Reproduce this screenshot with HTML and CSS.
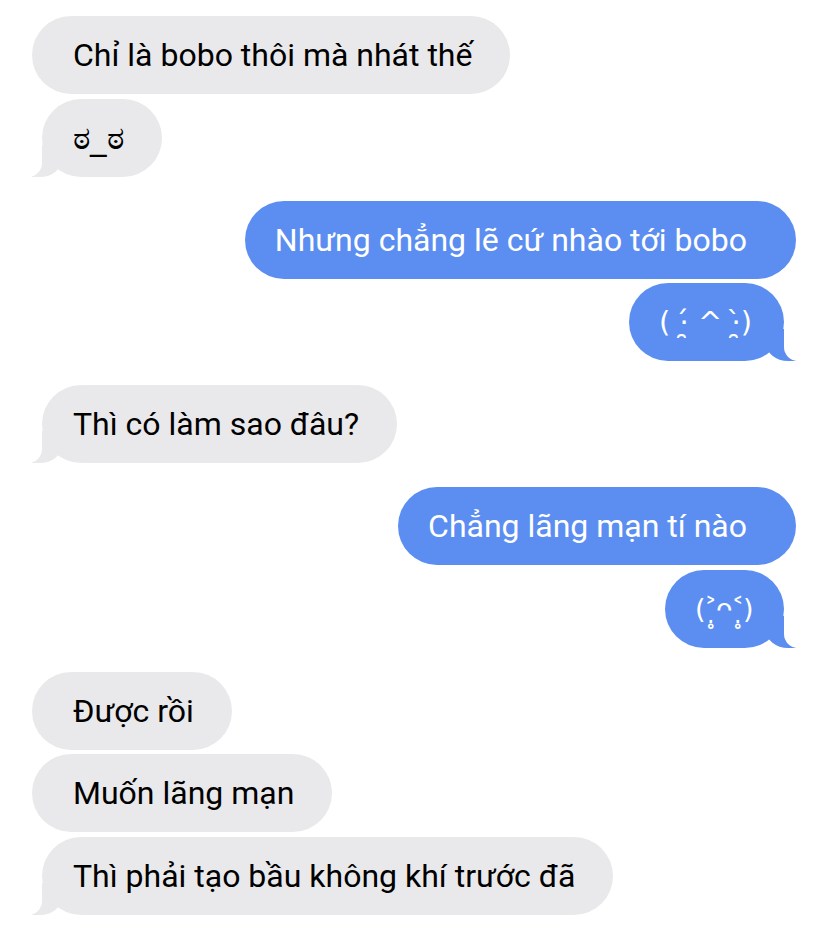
FILE: index.html
```html
<!DOCTYPE html>
<html lang="vi">
<head>
    <meta charset="UTF-8">
    <meta name="viewport" content="width=device-width, initial-scale=1.0">
    <title>Tin nhắn</title>
    <link rel="stylesheet" href="styles.css">
</head>
<body>
    <main class="chat">
        <div class="group">
            <div class="msg in">Chỉ là bobo thôi mà nhát thế</div>
            <div class="msg in tail"><span class="face look">ಠ_ಠ</span></div>
        </div>

        <div class="group">
            <div class="msg out">Nhưng chẳng lẽ cứ nhào tới bobo</div>
            <div class="msg out tail"><span class="face sad">( ·̯́ ^ ·̯̀)</span></div>
        </div>

        <div class="group">
            <div class="msg in tail">Thì có làm sao đâu?</div>
        </div>

        <div class="group">
            <div class="msg out">Chẳng lãng mạn tí nào</div>
            <div class="msg out tail"><span class="face cry">(˃̣̥ᴖ˂̣̥)</span></div>
        </div>

        <div class="group">
            <div class="msg in">Được rồi</div>
            <div class="msg in">Muốn lãng mạn</div>
            <div class="msg in tail">Thì phải tạo bầu không khí trước đã</div>
        </div>
    </main>
</body>
</html>
```

FILE: styles.css
```css
body {
    margin: 0;
    padding: 0;
    background: #fff;
    font-family: Roboto, "DejaVu Sans", "Noto Sans", sans-serif;
}

.chat {
    display: flex;
    flex-direction: column;
    gap: 24px;
    padding: 16px 32px 0 32px;
}

.group {
    display: flex;
    flex-direction: column;
    gap: 4.5px;
}

.msg {
    position: relative;
    z-index: 0;
    display: flex;
    align-items: center;
    height: 78px;
    border-radius: 39px;
    font-size: 32px;
    white-space: nowrap;
}

.face {
    font-family: "DejaVu Sans", sans-serif;
}

.look {
    font-size: 33px;
}

.sad {
    font-size: 29px;
}

.cry {
    font-size: 27px;
    letter-spacing: -1.5px;
}

.in {
    align-self: flex-start;
    background: #e9e9eb;
    color: #000;
    padding: 0 38px 0 41px;
}

.in.tail {
    margin-left: 10px;
    padding-left: 31px;
}

.out {
    align-self: flex-end;
    background: #5b8ef0;
    color: #fff;
    padding: 0 49px 0 30px;
}

.out.tail {
    margin-right: 12px;
    padding-right: 32px;
}

/* bubble tails */
.tail::before,
.tail::after {
    content: "";
    position: absolute;
    bottom: 0;
    height: 32px;
    z-index: -1;
}

.in.tail::before {
    left: -10px;
    width: 30px;
    background: #e9e9eb;
    border-bottom-right-radius: 22px 18px;
}

.in.tail::after {
    left: -32px;
    width: 32px;
    background: #fff;
    border-bottom-right-radius: 14px;
}

.out.tail::before {
    right: -12px;
    width: 30px;
    background: #5b8ef0;
    border-bottom-left-radius: 22px 18px;
}

.out.tail::after {
    right: -34px;
    width: 34px;
    background: #fff;
    border-bottom-left-radius: 14px;
}
```
